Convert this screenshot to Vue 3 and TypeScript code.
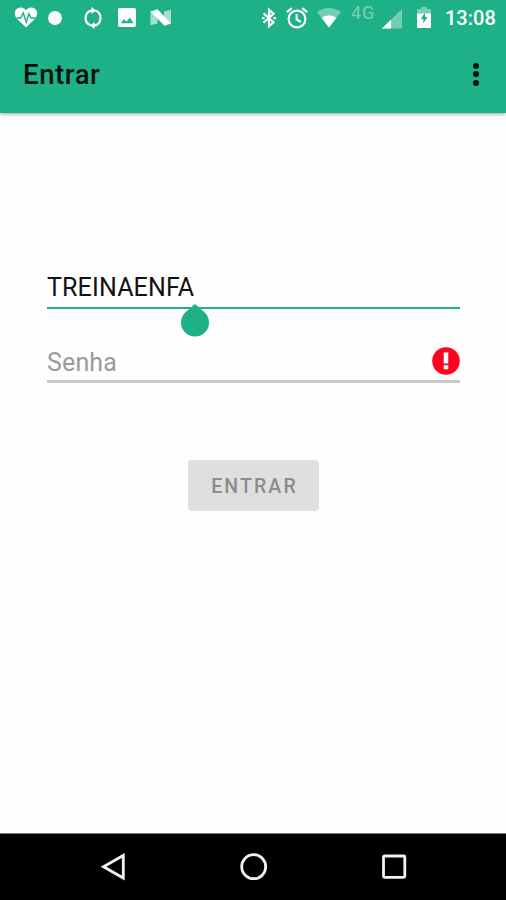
<script setup lang="ts">
import { ref } from 'vue'

const user = ref('TREINAENFA')
const password = ref('')
</script>

<template>
  <div class="screen">
    <header class="top">
      <div class="status">
        <div class="group">
          <svg class="heart" viewBox="0 0 24 22">
            <path fill="#fff" d="M12 21.500 2.600 12.200C-.8 8.600 0 4.100 2.300 2.200 5.300-.3 9.500.2 12 3.400 14.500.2 18.700-.3 21.700 2.200 24 4.100 24.800 8.600 21.400 12.200Z" />
            <path class="pulse" d="M2 11.500h4.500L9 6l3.300 10 2.800-9 2 4.500H22" />
          </svg>
          <svg class="dot" viewBox="0 0 14 14"><circle cx="7" cy="7" r="6.900" fill="#fff" /></svg>
          <svg class="sync" viewBox="0 0 20 22">
            <path class="line" d="M9 3.300A7.900 7.900 0 0 0 7.800 18.500M11 18.700A7.900 7.900 0 0 0 12.200 3.500" />
            <path fill="#fff" d="M8.500-.2v7.200l4.300-3.600zM11.500 15v7.200l-4.300-3.600z" />
          </svg>
          <svg class="image" viewBox="0 0 18 19">
            <rect width="18" height="19" rx="2" fill="#fff" />
            <path fill="#1eb188" d="m2.800 15.300 3.300-4.400 2.400 2.800 3.300-4.300 3.800 5.900z" />
          </svg>
          <svg class="nougat" viewBox="0 0 22 17">
            <path fill="#fff" opacity=".6" d="M.5 2.500 7.500 5v9.500L.5 16.300zM14 2.500 21 .7v14L14 12z" />
            <path fill="#fff" d="M.5 2.500 7.500.3 21 14.500l-6.500 2.300z" />
          </svg>
        </div>
        <div class="group">
          <svg class="bluetooth" viewBox="0 0 14 20">
            <path class="line" d="m1.500 5.200 10 9L7 18.200V1.800l4.500 4-10 9" />
            <path fill="#fff" d="M0 8.900h2.500v2.300H0zM11.500 8.900H14v2.300h-2.500z" />
          </svg>
          <svg class="alarm" viewBox="0 0 22 22">
            <circle class="line" cx="11" cy="12" r="8.400" />
            <path class="line" d="M.8 5.200 5.800 1.200M21.200 5.200l-5-4" />
            <path class="line" d="M10.700 7v5.400l4 2.600" />
          </svg>
          <svg class="wifi" viewBox="0 0 24 20">
            <path fill="#fff" opacity=".38" d="M0 4Q12-3.800 24 4L12 19.500z" />
            <path fill="#fff" d="M4.600 9.800Q12 4.600 19.400 9.800L12 19.500z" />
          </svg>
          <span class="network">4G</span>
          <svg class="signal" viewBox="0 0 20 20">
            <path fill="#fff" opacity=".38" d="M20 0v19.500H0z" />
            <path fill="#fff" d="M9 10.800v8.700H0z" />
          </svg>
          <svg class="battery" viewBox="0 0 14 21">
            <path fill="#fff" opacity=".4" d="M4.300 0h5.400v2H14v5H0V2h4.300z" />
            <path fill="#fff" d="M0 6.500h14V20q0 1-1 1H1q-1 0-1-1z" />
            <path fill="#1eb188" d="M8 5.700v4h2.500L6.300 16.500v-4.600H3.700z" />
          </svg>
          <time class="clock">13:08</time>
        </div>
      </div>
      <div class="toolbar">
        <h1>Entrar</h1>
        <button class="more" type="button" aria-label="Menu"><i /><i /><i /></button>
      </div>
    </header>

    <form class="form" @submit.prevent>
      <div class="field">
        <input v-model="user" type="text" spellcheck="false" />
        <svg class="handle" viewBox="0 0 28 33">
          <path fill="#1eb188" d="M12.600 1.500q1.400-1.600 2.800 0L24 9.300A14 14 0 1 1 4 9.300Z" />
        </svg>
      </div>
      <div class="field secret">
        <input v-model="password" type="password" placeholder="Senha" />
        <svg class="error" viewBox="0 0 28 28">
          <circle cx="14" cy="14" r="13.800" fill="#ff0020" />
          <path fill="#fff" d="M11.700 5.500h4.600v11h-4.600zM11.700 18.300h4.600v4h-4.600z" />
        </svg>
      </div>
      <button class="submit" type="submit" disabled>ENTRAR</button>
    </form>

    <nav class="nav">
      <svg viewBox="0 0 28 28"><path d="M24.300 2.500v22.500L4.500 13.700Z" /></svg>
      <svg viewBox="0 0 28 28"><circle cx="13.700" cy="13.700" r="12" /></svg>
      <svg viewBox="0 0 28 28"><rect x="3.500" y="3" width="21.300" height="21.300" rx="1" /></svg>
    </nav>
  </div>
</template>

<style>
body {
  margin: 0;
}
</style>

<style scoped>
.screen {
  display: flex;
  flex-direction: column;
  width: 506px;
  height: 900px;
  overflow: hidden;
  background: #fefefe;
  font-family: Roboto, "Liberation Sans", sans-serif;
}
svg {
  display: block;
  flex: none;
  overflow: visible;
}
.top {
  height: 113px;
  background: #1eb188;
  box-shadow: 0 1px 4px rgba(0, 0, 0, 0.4);
}
.status {
  display: flex;
  justify-content: space-between;
  height: 35px;
  padding: 0 11px 0 14px;
}
.group {
  display: flex;
  align-items: center;
}
.line {
  fill: none;
  stroke: #fff;
  stroke-width: 2.2;
}
.pulse {
  fill: none;
  stroke: #1eb188;
  stroke-width: 1.5;
}
.heart {
  width: 24px;
  height: 21px;
}
.dot {
  width: 14px;
  height: 14px;
  margin-left: 10px;
}
.sync {
  width: 20px;
  height: 22px;
  margin-left: 21px;
}
.image {
  width: 18px;
  height: 19px;
  margin-left: 15px;
}
.nougat {
  width: 22px;
  height: 17px;
  margin-left: 14px;
}
.bluetooth {
  width: 14px;
  height: 20px;
}
.alarm {
  width: 22px;
  height: 22px;
  margin-left: 10px;
}
.wifi {
  width: 24px;
  height: 20px;
  margin-left: 9px;
}
.network {
  width: 24px;
  margin: 0 7px 9px 10px;
  color: #7bd0b7;
  font-size: 18px;
  line-height: 20px;
  letter-spacing: 1px;
  white-space: nowrap;
}
.signal {
  width: 20px;
  height: 20px;
  margin-top: 2px;
}
.battery {
  width: 14px;
  height: 21px;
  margin-left: 15px;
}
.clock {
  width: 50px;
  margin-left: 14px;
  color: #fff;
  font-size: 20px;
  font-weight: 500;
  line-height: 24px;
}
.toolbar {
  display: flex;
  align-items: center;
  justify-content: space-between;
  height: 78px;
  padding: 0 26px 0 23px;
}
h1 {
  margin: 0;
  padding-top: 2px;
  color: #03110d;
  font-size: 27.5px;
  font-weight: 500;
  line-height: 32px;
  letter-spacing: 0.6px;
}
.more {
  display: flex;
  flex-direction: column;
  gap: 2.5px;
  padding: 0 1px;
  border: 0;
  background: none;
}
.more i {
  width: 6px;
  height: 6px;
  border-radius: 50%;
  background: #03110d;
}
.form {
  display: flex;
  flex: 1;
  flex-direction: column;
  padding: 155px 46px 0 47px;
}
.field {
  position: relative;
  display: flex;
  align-items: center;
  box-sizing: border-box;
  height: 41px;
  border-bottom: 2px solid #1eb188;
}
.field input {
  flex: 1;
  min-width: 0;
  height: 36px;
  padding: 0;
  border: 0;
  outline: 0;
  background: none;
  color: #111;
  font: 400 25px/36px Roboto, "Liberation Sans", sans-serif;
  letter-spacing: 0.15px;
}
.field input::placeholder {
  color: #9a9a9a;
  opacity: 1;
}
.handle {
  position: absolute;
  top: 35px;
  left: 134px;
  width: 28px;
  height: 34px;
}
.secret {
  height: 42px;
  margin-top: 32px;
  border-bottom: 3px solid #c8c8c8;
}
.secret input {
  height: 40px;
  padding-top: 4px;
}
.error {
  width: 28px;
  height: 28px;
}
.submit {
  align-self: center;
  width: 131px;
  height: 51px;
  margin-top: 77px;
  padding: 2px 0 0 2px;
  border: 0;
  border-radius: 4px;
  background: #dfdfdf;
  color: #8c8c8c;
  font: 500 19.5px/24px Roboto, "Liberation Sans", sans-serif;
  letter-spacing: 2.1px;
}
.nav {
  display: flex;
  gap: 112.5px;
  box-sizing: border-box;
  height: 67px;
  padding: 19px 0 0 99px;
  border-top: 1px solid #777;
  background: #000;
}
.nav svg {
  width: 28px;
  height: 28px;
  fill: none;
  stroke: #f2f2f2;
  stroke-width: 2.8;
}
</style>
